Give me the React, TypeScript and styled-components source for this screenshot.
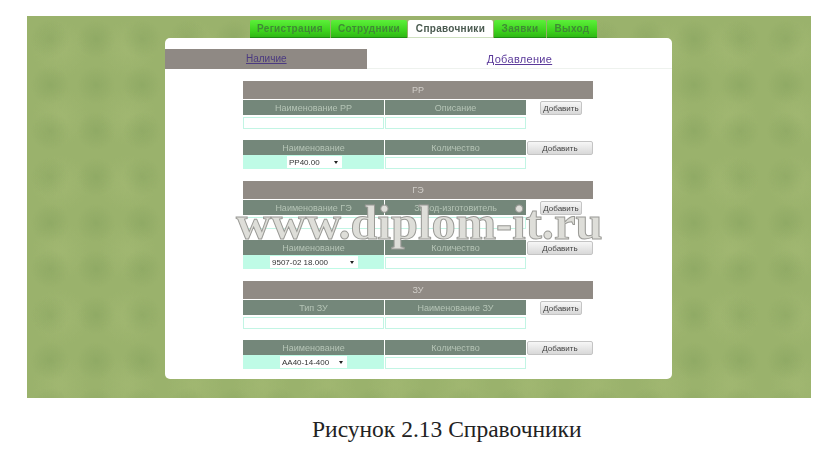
import styled, { createGlobalStyle } from "styled-components";

const GlobalStyle = createGlobalStyle`
  html, body {
    margin: 0;
    padding: 0;
    background: #fff;
  }
  body {
    width: 839px;
    height: 460px;
    overflow: hidden;
    font-family: "Liberation Sans", Arial, sans-serif;
  }
`;

const Page = styled.div`
  width: 839px;
  height: 460px;
  padding: 16px 28px 0 27px;
  box-sizing: border-box;
  position: relative;
`;

const Shot = styled.div`
  height: 382px;
  padding-top: 4px;
  box-sizing: border-box;
  background-color: #9ab26c;
  background-image:
    radial-gradient(circle at 50% 50%, rgba(125, 155, 88, 0.35) 0, transparent 60%),
    radial-gradient(circle at 50% 50%, rgba(172, 192, 122, 0.35) 0, transparent 60%);
  background-size: 46px 46px, 67px 67px;
  display: flex;
  flex-direction: column;
  align-items: center;
  filter: blur(0.45px);
`;

const Menu = styled.nav`
  display: flex;
  gap: 1px;
  height: 18px;
  margin-left: 9px;
`;

const MenuItem = styled.div<{ $active?: boolean; $w: number }>`
  height: 18px;
  box-sizing: border-box;
  width: ${(p) => p.$w}px;
  display: flex;
  align-items: center;
  justify-content: center;
  font-size: 10px;
  font-weight: bold;
  letter-spacing: 0.3px;
  color: ${(p) => (p.$active ? "#4a5a50" : "#3f8a35")};
  background: ${(p) =>
    p.$active ? "#fff" : "linear-gradient(#5cf03a, #3ed41e 60%, #2fb815)"};
  border-bottom: 1px solid ${(p) => (p.$active ? "#cfe0c0" : "#1f8f12")};
  border-radius: 2px 2px 0 0;
`;

const Panel = styled.main`
  width: 507px;
  height: 341px;
  background: #fff;
  border-radius: 5px;
  padding-top: 11px;
  box-sizing: border-box;
  margin-left: -1px;
`;

const SubTabs = styled.div`
  display: grid;
  grid-template-columns: 202px 1fr;
  height: 20px;
  margin-bottom: 12px;
`;

const SubTab = styled.a<{ $active?: boolean }>`
  display: flex;
  align-items: center;
  justify-content: ${(p) => (p.$active ? "flex-start" : "center")};
  padding-left: ${(p) => (p.$active ? "81px" : "0")};
  font-size: ${(p) => (p.$active ? "10px" : "11px")};
  letter-spacing: ${(p) => (p.$active ? "0" : "0.3px")};
  color: ${(p) => (p.$active ? "#4b3a80" : "#5b3a9a")};
  text-decoration: underline;
  background: ${(p) => (p.$active ? "#8f8984" : "#fff")};
  border-bottom: 1px solid ${(p) => (p.$active ? "#8f8984" : "#eef2ee")};
`;

const Section = styled.section`
  width: 350px;
  margin: 0 0 12px 78px;
`;

const SectionTitle = styled.div`
  height: 18px;
  background: #908a84;
  color: #d0cdc8;
  font-size: 9px;
  display: flex;
  align-items: center;
  justify-content: center;
  margin-bottom: 1px;
`;

const FormRow = styled.div`
  display: grid;
  grid-template-columns: 141px 141px 66px;
  column-gap: 1px;
  grid-template-rows: 15px 14px;
  margin-bottom: 11px;

  &:last-child {
    margin-bottom: 0;
  }
`;

const HeadCell = styled.div`
  background: #74877a;
  color: #b5c4b6;
  font-size: 9px;
  white-space: nowrap;
  display: flex;
  align-items: center;
  justify-content: center;
`;

const TextInput = styled.div`
  margin-top: 2px;
  height: 12px;
  box-sizing: border-box;
  background: #fff;
  border: 1px solid #c2f5e4;
`;

const SelectCell = styled.div<{ $pad: number }>`
  background: #bffbe6;
  padding-left: ${(p) => p.$pad}px;
  display: flex;
  align-items: center;
`;

const FakeSelect = styled.div<{ $w: number }>`
  width: ${(p) => p.$w}px;
  height: 12px;
  background: #fff;
  font-size: 8px;
  color: #333;
  padding: 0 4px 0 2px;
  box-sizing: border-box;
  display: flex;
  align-items: center;
  justify-content: space-between;
`;

const Arrow = styled.span`
  width: 0;
  height: 0;
  border-left: 2.5px solid transparent;
  border-right: 2.5px solid transparent;
  border-top: 3px solid #222;
`;

const ButtonCell = styled.div<{ $wide?: boolean }>`
  grid-column: 3;
  grid-row: 1 / span 2;
  display: flex;
  align-items: flex-start;
  padding-left: ${(p) => (p.$wide ? "0" : "13px")};
  padding-top: 1px;
`;

const AddButton = styled.button<{ $wide?: boolean }>`
  width: ${(p) => (p.$wide ? "66px" : "42px")};
  height: 14px;
  padding: 0;
  font-family: "Liberation Sans", Arial, sans-serif;
  font-size: 8px;
  color: #444;
  background: linear-gradient(#f6f6f6, #d8d8d8);
  border: 1px solid #c4c4c4;
  border-radius: 2px;
`;

const Caption = styled.div`
  margin-top: 19px;
  margin-left: 285px;
  font-family: "Liberation Serif", "Times New Roman", serif;
  font-size: 23.5px;
  color: #222;
  line-height: 24px;
  white-space: nowrap;
`;

const Watermark = styled.div`
  position: absolute;
  left: 236px;
  top: 198px;
  font-family: "Liberation Serif", "Times New Roman", serif;
  font-size: 48.5px;
  line-height: 50px;
  font-weight: bold;
  white-space: nowrap;
  color: #deded9;
  -webkit-text-stroke: 1px #9a9a96;
`;

const menu = [
  { label: "Регистрация", w: 80 },
  { label: "Сотрудники", w: 76 },
  { label: "Справочники", w: 85 },
  { label: "Заявки", w: 52 },
  { label: "Выход", w: 50 },
];

const sections = [
  { title: "РР", a: "Наименование РР", b: "Описание", value: "РР40.00", pad: 44, sel: 55 },
  { title: "ГЭ", a: "Наименование ГЭ", b: "Завод-изготовитель", value: "9507-02 18.000", pad: 27, sel: 88 },
  { title: "ЗУ", a: "Тип ЗУ", b: "Наименование ЗУ", value: "АА40-14-400", pad: 37, sel: 67 },
];

export default function App() {
  return (
    <>
      <GlobalStyle />
      <Page>
        <Shot>
          <Menu>
            {menu.map((m) => (
              <MenuItem key={m.label} $w={m.w} $active={m.label === "Справочники"}>
                {m.label}
              </MenuItem>
            ))}
          </Menu>
          <Panel>
            <SubTabs>
              <SubTab $active>Наличие</SubTab>
              <SubTab>Добавление</SubTab>
            </SubTabs>
            {sections.map((s) => (
              <Section key={s.title}>
                <SectionTitle>{s.title}</SectionTitle>
                <FormRow>
                  <HeadCell>{s.a}</HeadCell>
                  <HeadCell>{s.b}</HeadCell>
                  <ButtonCell>
                    <AddButton>Добавить</AddButton>
                  </ButtonCell>
                  <TextInput />
                  <TextInput />
                </FormRow>
                <FormRow>
                  <HeadCell>Наименование</HeadCell>
                  <HeadCell>Количество</HeadCell>
                  <ButtonCell $wide>
                    <AddButton $wide>Добавить</AddButton>
                  </ButtonCell>
                  <SelectCell $pad={s.pad}>
                    <FakeSelect $w={s.sel}>
                      {s.value}
                      <Arrow />
                    </FakeSelect>
                  </SelectCell>
                  <TextInput />
                </FormRow>
              </Section>
            ))}
          </Panel>
        </Shot>
        <Caption>Рисунок 2.13 Справочники</Caption>
        <Watermark>www.diplom-it.ru</Watermark>
      </Page>
    </>
  );
}
